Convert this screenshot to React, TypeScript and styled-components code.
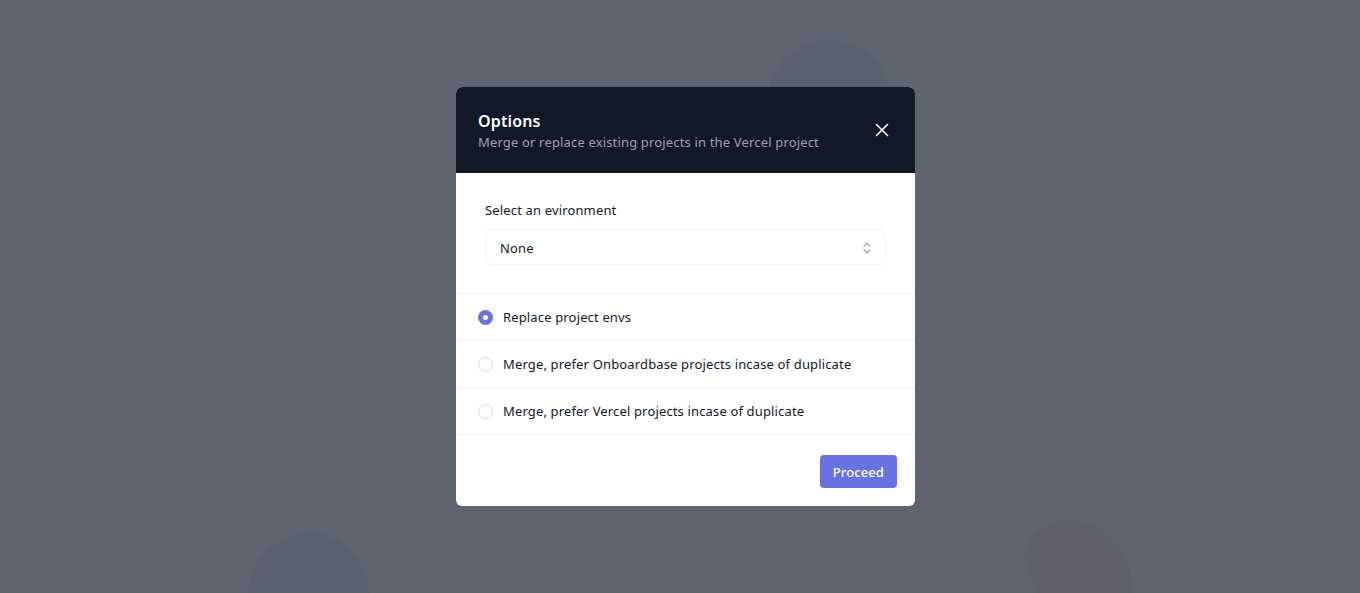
import React, { useState } from 'react'
import styled, { createGlobalStyle } from 'styled-components'

const GlobalStyle = createGlobalStyle`
  html, body {
    margin: 0;
    padding: 0;
    height: 100%;
  }
  body {
    font-family: 'Noto Sans', 'Open Sans', sans-serif;
    background: #5f6470;
    -webkit-font-smoothing: antialiased;
  }
  #root {
    height: 100%;
  }
`

const OPTIONS = [
  'Replace project envs',
  'Merge, prefer Onboardbase projects incase of duplicate',
  'Merge, prefer Vercel projects incase of duplicate',
]

const App: React.FC = () => {
  const [selected, setSelected] = useState(0)

  return (
    <>
      <GlobalStyle />
      <StyledPage>
        <StyledBlob size={124} top={40} left={767} color="#5a6070" />
        <StyledBlobLeft />
        <StyledBlobRight />
        <StyledModal>
          <StyledHeader>
            <div>
              <StyledTitle>Options</StyledTitle>
              <StyledSubtitle>Merge or replace existing projects in the Vercel project</StyledSubtitle>
            </div>
            <StyledClose aria-label="Close">
              <svg width="16" height="16" viewBox="0 0 16 16" fill="none">
                <path d="M2.5 2.5l11 11M13.5 2.5l-11 11" stroke="#fff" strokeWidth="1.6" strokeLinecap="round" />
              </svg>
            </StyledClose>
          </StyledHeader>

          <StyledField>
            <StyledLabel>Select an evironment</StyledLabel>
            <StyledSelect>
              <span>None</span>
              <svg width="12" height="16" viewBox="0 0 12 16" fill="none">
                <path d="M3 6l3-3 3 3M3 10l3 3 3-3" stroke="#9ca3af" strokeWidth="1.3" strokeLinecap="round" strokeLinejoin="round" />
              </svg>
            </StyledSelect>
          </StyledField>

          <StyledList>
            {OPTIONS.map((text, i) => (
              <StyledRow key={text} onClick={() => setSelected(i)}>
                <StyledRadio checked={selected === i} />
                <span>{text}</span>
              </StyledRow>
            ))}
          </StyledList>

          <StyledFooter>
            <StyledButton>Proceed</StyledButton>
          </StyledFooter>
        </StyledModal>
      </StyledPage>
    </>
  )
}

const StyledPage = styled.div`
  position: relative;
  overflow: hidden;
  height: 593px;
  display: flex;
  align-items: flex-start;
  justify-content: center;
  padding: 87px 0 0 11px;
  box-sizing: border-box;
`

interface BlobProps {
  size: number
  top: number
  left: number
  color: string
}

const StyledBlob = styled.div<BlobProps>`
  position: absolute;
  width: ${props => props.size}px;
  height: ${props => props.size}px;
  top: ${props => props.top}px;
  left: ${props => props.left}px;
  border-radius: 50%;
  background: ${props => props.color};
`

const StyledBlobLeft = styled.div`
  position: absolute;
  left: 248px;
  top: 533px;
  width: 122px;
  height: 120px;
  background: #5a6070;
  border-radius: 55% 50% 20% 50% / 55% 60% 30% 50%;
`

const StyledBlobRight = styled.div`
  position: absolute;
  left: 1033px;
  top: 517px;
  width: 96px;
  height: 120px;
  background: #5f606c;
  border-radius: 40% 60% 50% 50% / 30% 55% 50% 60%;
  transform: rotate(-20deg);
`

const StyledModal = styled.div`
  position: relative;
  z-index: 1;
  width: 459px;
  background: #fff;
  border-radius: 6px;
  overflow: hidden;
  letter-spacing: 0.15px;
`

const StyledHeader = styled.div`
  background: #111827;
  height: 86px;
  box-sizing: border-box;
  padding: 23px 22px 0 22px;
  display: flex;
  justify-content: space-between;
  align-items: flex-start;
`

const StyledTitle = styled.div`
  color: #fff;
  font-size: 16px;
  font-weight: 600;
  line-height: 22px;
`

const StyledSubtitle = styled.div`
  color: #9ca3af;
  font-size: 13px;
  line-height: 20px;
  letter-spacing: 0.16px;
`

const StyledClose = styled.button`
  background: none;
  border: none;
  padding: 0;
  margin-top: 12px;
  margin-right: 3px;
  cursor: pointer;
  display: flex;
`

const StyledField = styled.div`
  padding: 27px 29px 28px 29px;
  border-bottom: 1px solid #f0f1f3;
`

const StyledLabel = styled.div`
  color: #111827;
  font-size: 13px;
  line-height: 20px;
  margin-bottom: 10px;
`

const StyledSelect = styled.div`
  height: 35px;
  box-sizing: border-box;
  border: 1px solid #f0f1f3;
  border-radius: 6px;
  display: flex;
  align-items: center;
  justify-content: space-between;
  padding: 0 12px 0 14px;
  font-size: 13px;
  color: #111827;
`

const StyledList = styled.div`
  display: flex;
  flex-direction: column;
`

const StyledRow = styled.label`
  height: 47px;
  box-sizing: border-box;
  display: flex;
  align-items: center;
  gap: 10px;
  padding: 0 22px;
  border-bottom: 1px solid #f0f1f3;
  font-size: 13px;
  color: #111827;
  cursor: pointer;
`

const StyledRadio = styled.span<{ checked: boolean }>`
  width: 15px;
  height: 15px;
  box-sizing: border-box;
  border-radius: 50%;
  flex-shrink: 0;
  background: ${props => (props.checked ? '#6772e5' : '#fff')};
  border: ${props => (props.checked ? 'none' : '1px solid #d1d5db')};
  display: flex;
  align-items: center;
  justify-content: center;
  &:after {
    content: "";
    width: 5px;
    height: 5px;
    border-radius: 50%;
    background: #fff;
    display: ${props => (props.checked ? 'block' : 'none')};
  }
`

const StyledFooter = styled.div`
  display: flex;
  justify-content: flex-end;
  padding: 20px 18px 18px 18px;
`

const StyledButton = styled.button`
  background: #6772e5;
  color: #fff;
  border: none;
  border-radius: 4px;
  height: 33px;
  padding: 0 13px;
  font-family: inherit;
  font-size: 13px;
  font-weight: 500;
  letter-spacing: 0.1px;
  cursor: pointer;
`

export default App
